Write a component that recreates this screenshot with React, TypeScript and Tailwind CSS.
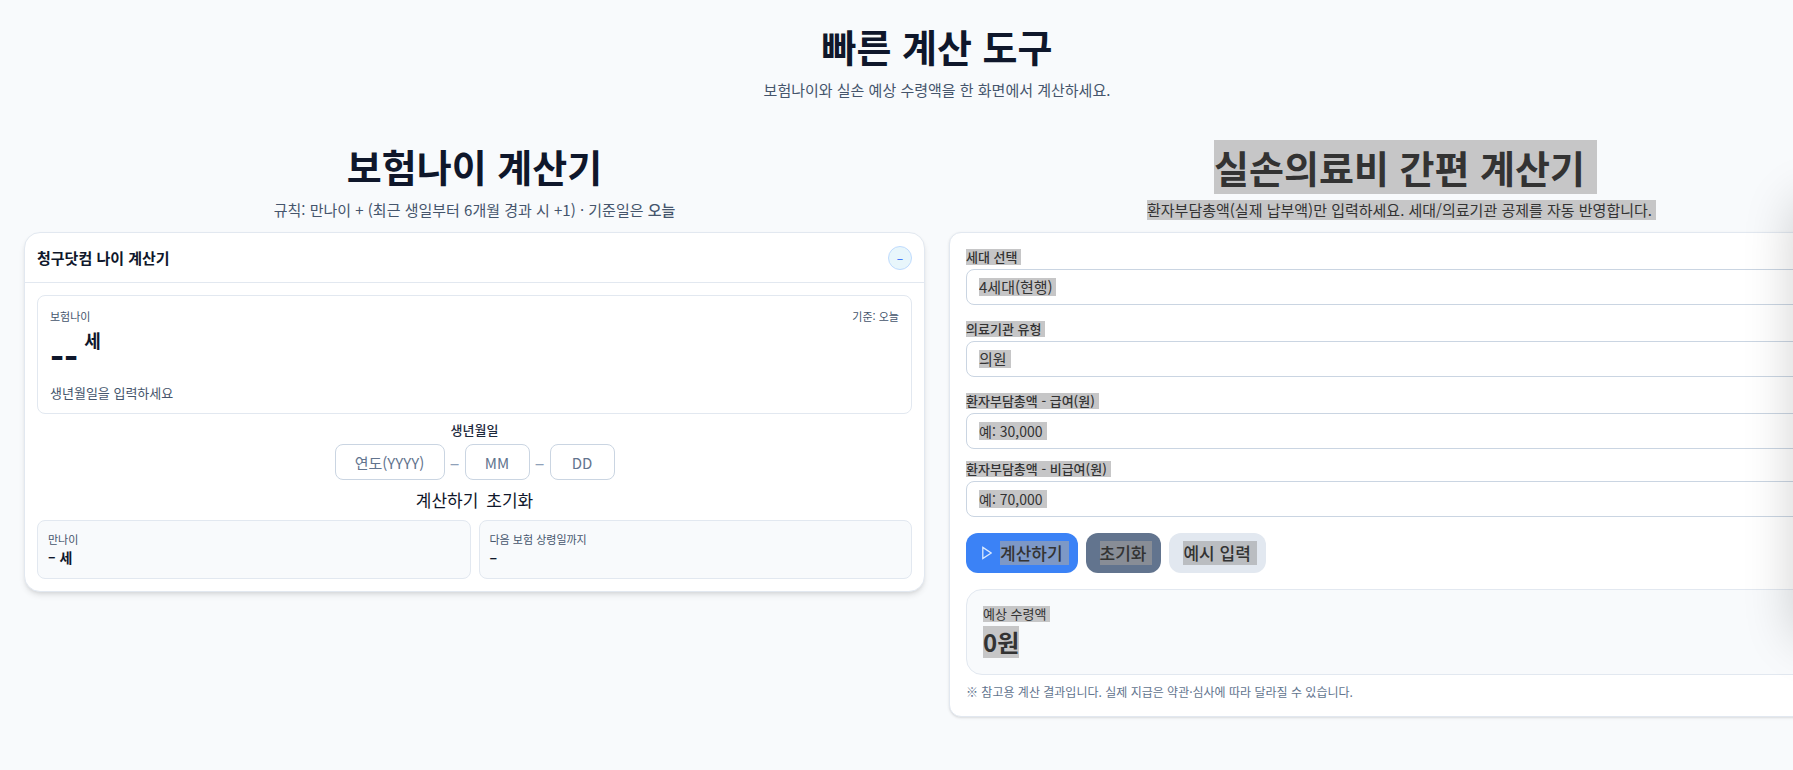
import type { ReactNode } from "react";

function Mark({
  children,
  tone = "bg-[#c6c6c7]",
  className = "",
}: {
  children: ReactNode;
  tone?: string;
  className?: string;
}) {
  return <span className={`inline-block text-[#333] ${tone} ${className}`}>{children}</span>;
}

function Dash() {
  return <span className="w-5 text-center text-lg leading-6 text-slate-400">–</span>;
}

const dateField =
  "h-9 rounded-lg border border-slate-300 bg-white text-center text-[15px] text-slate-900 outline-none placeholder:text-slate-500";

function AgeCalculator() {
  return (
    <section className="min-w-0">
      <h2 className="text-center text-[38px] leading-[52px] font-bold">보험나이 계산기</h2>
      <p className="mt-2 text-center text-[15px] leading-5 text-slate-600">
        규칙: 만나이 + (최근 생일부터 6개월 경과 시 +1) · 기준일은 <strong className="font-medium">오늘</strong>
      </p>
      <div className="mt-3 rounded-2xl border border-slate-200 bg-white shadow-md">
        <header className="flex h-[50px] items-center justify-between border-b border-slate-200 px-3">
          <h3 className="text-[15px] leading-6 font-bold">청구닷컴 나이 계산기</h3>
          <button
            type="button"
            aria-label="접기"
            className="flex size-6 items-center justify-center rounded-full border border-[#bfdbfe] bg-[#e8f6fb] text-xs text-blue-600"
          >
            –
          </button>
        </header>
        <div className="p-3">
          <div className="rounded-lg border border-slate-200 p-3">
            <div className="flex justify-between text-[11px] leading-4 text-slate-600">
              <span>보험나이</span>
              <span>기준: 오늘</span>
            </div>
            <div className="flex h-14 gap-1.5 font-bold">
              <span className="text-[38px] leading-[64px]">--</span>
              <span className="text-lg leading-8">세</span>
            </div>
            <p className="mt-1 text-[13px] leading-[17px] text-slate-600">생년월일을 입력하세요</p>
          </div>
          <fieldset className="mt-2 flex flex-col items-center">
            <legend className="mx-auto mb-1.5 text-[13px] leading-4 font-medium text-slate-800">생년월일</legend>
            <div className="flex items-center">
              <input aria-label="연도" placeholder="연도(YYYY)" className={`w-[110px] ${dateField}`} />
              <Dash />
              <input aria-label="월" placeholder="MM" className={`w-[65px] ${dateField}`} />
              <Dash />
              <input aria-label="일" placeholder="DD" className={`w-[65px] ${dateField}`} />
            </div>
          </fieldset>
          <div className="mt-2 flex justify-center gap-2 text-[17px] leading-6">
            <button type="button">계산하기</button>
            <button type="button">초기화</button>
          </div>
          <div className="mt-2 grid grid-cols-2 gap-2">
            <div className="rounded-lg border border-slate-200 bg-slate-50 p-2.5">
              <p className="text-[11px] leading-4 text-slate-600">만나이</p>
              <p className="text-sm leading-[21px] font-bold">– 세</p>
            </div>
            <div className="rounded-lg border border-slate-200 bg-slate-50 p-2.5">
              <p className="text-[11px] leading-4 text-slate-600">다음 보험 상령일까지</p>
              <p className="text-sm leading-[21px] font-bold">–</p>
            </div>
          </div>
        </div>
      </div>
    </section>
  );
}

function Field({ id, label, children }: { id: string; label: string; children: ReactNode }) {
  return (
    <div>
      <label htmlFor={id} className="mb-1 block text-[13px] leading-4 font-medium">
        <Mark className="pr-1">{label}</Mark>
      </label>
      <div className="flex h-9 items-center rounded-lg border border-slate-300 bg-white px-3">{children}</div>
    </div>
  );
}

const fieldText =
  "h-[18px] appearance-none bg-[#c6c6c7] leading-[18px] text-[#333] outline-none placeholder:text-[#333]";

function MedicalCalculator() {
  return (
    <section className="min-w-0">
      <h2 className="text-center text-[38px] leading-[54px] font-bold">
        <Mark className="-mr-3 pr-3">실손의료비 간편 계산기</Mark>
      </h2>
      <p className="mt-1.5 text-center text-[15px] leading-5">
        <Mark className="-mr-1 pr-1">환자부담총액(실제 납부액)만 입력하세요. 세대/의료기관 공제를 자동 반영합니다.</Mark>
      </p>
      <div className="mt-3 rounded-xl border border-slate-200 bg-white p-4 shadow-sm">
        <div className="flex flex-col gap-4">
          <Field id="generation" label="세대 선택">
            <select id="generation" className={`w-[77px] text-[15px] ${fieldText}`}>
              <option>4세대(현행)</option>
            </select>
          </Field>
          <Field id="facility" label="의료기관 유형">
            <select id="facility" className={`w-8 text-[15px] ${fieldText}`}>
              <option>의원</option>
            </select>
          </Field>
          <div className="flex flex-col gap-3">
            <Field id="covered" label="환자부담총액 - 급여(원)">
              <input id="covered" placeholder="예: 30,000" className={`w-[68px] text-sm ${fieldText}`} />
            </Field>
            <Field id="uncovered" label="환자부담총액 - 비급여(원)">
              <input id="uncovered" placeholder="예: 70,000" className={`w-[68px] text-sm ${fieldText}`} />
            </Field>
          </div>
          <div className="flex gap-2 text-[17px] leading-6 font-medium">
            <button type="button" className="flex h-10 items-center gap-2 rounded-xl bg-[#3b82f6] pr-[9px] pl-4">
              <svg viewBox="0 0 10 14" className="h-3.5 w-2.5" fill="none" stroke="#dbeafe" strokeWidth="1.3">
                <path d="M0.8 1.4 L9.2 7 L0.8 12.6 Z" />
              </svg>
              <Mark tone="bg-[#7d98c6]" className="pr-1.5">
                계산하기
              </Mark>
            </button>
            <button type="button" className="h-10 rounded-xl bg-slate-500 pr-[9px] pl-3.5">
              <Mark tone="bg-[#888d96]" className="pr-1.5">
                초기화
              </Mark>
            </button>
            <button type="button" className="h-10 rounded-xl bg-slate-200 pr-[9px] pl-3.5">
              <Mark tone="bg-[#babdc1]" className="pr-1.5">
                예시 입력
              </Mark>
            </button>
          </div>
          <div className="flex flex-col items-start gap-1 rounded-2xl border border-slate-200 bg-slate-50 p-4">
            <Mark className="pr-1 text-[13px] leading-4">예상 수령액</Mark>
            <Mark className="text-2xl leading-8 font-bold">0원</Mark>
          </div>
        </div>
        <p className="mt-2 text-xs leading-[17px] text-slate-500">
          ※ 참고용 계산 결과입니다. 실제 지급은 약관·심사에 따라 달라질 수 있습니다.
        </p>
      </div>
    </section>
  );
}

export default function App() {
  return (
    <div
      lang="ko"
      className="relative min-h-screen overflow-hidden bg-slate-50 font-['Noto_Sans_CJK_KR',sans-serif] text-slate-900"
    >
      <main className="-mr-[81px] px-6 py-6">
        <h1 className="text-center text-[38px] leading-[44px] font-bold">빠른 계산 도구</h1>
        <p className="mt-3 text-center text-[15px] leading-5 text-slate-600">
          보험나이와 실손 예상 수령액을 한 화면에서 계산하세요.
        </p>
        <div className="mt-10 grid grid-cols-2 items-start gap-6">
          <AgeCalculator />
          <MedicalCalculator />
        </div>
      </main>
      <aside className="absolute top-[180px] left-full h-[440px] w-80 rounded-2xl bg-white shadow-[0_20px_50px_rgba(0,0,0,0.18)]" />
    </div>
  );
}
